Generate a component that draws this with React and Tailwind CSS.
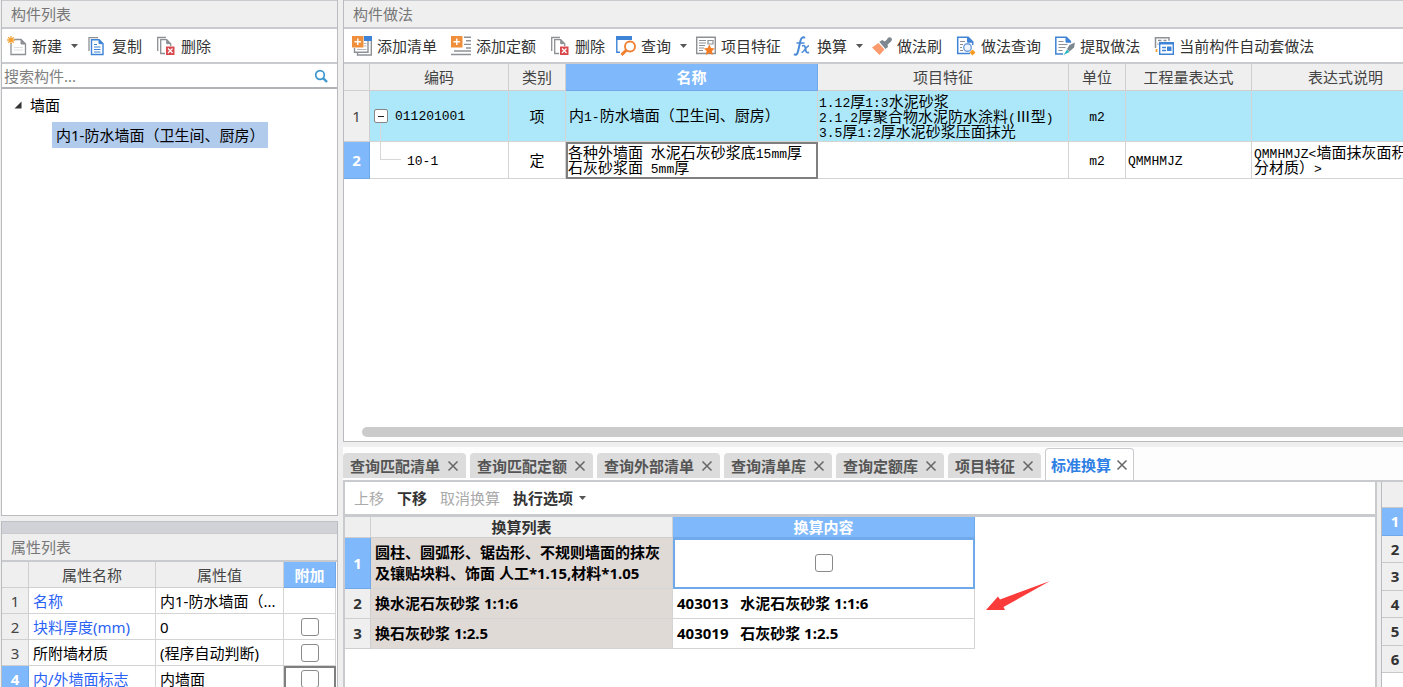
import { useState } from "react";

/* ---------- icons ---------- */
const Svg = ({ children }) => (
  <svg width="20" height="20" viewBox="0 0 20 20" fill="none" className="shrink-0" aria-hidden="true">
    {children}
  </svg>
);

const NewIcon = () => (
  <Svg>
    <path d="M4 3.5h10l4.500 4.500v10.500H4z" fill="#fff" stroke="#8d9196" strokeWidth="1.300" />
    <path d="M14 3.500v4.500h4.500z" fill="#8d9196" stroke="#8d9196" />
    <path d="M7 11.500h9M7 14h9" stroke="#dcdee0" />
    <path d="M1 1h6v6H1z" fill="#fff" />
    <path d="M4 0v8M0 4h8M1.200 1.200l5.600 5.600M6.800 1.200 1.200 6.800" stroke="#f5a43a" strokeWidth="1.300" />
  </Svg>
);

const CopyIcon = () => (
  <Svg>
    <path d="M2 15V1.700h9" stroke="#8d9196" strokeWidth="1.300" />
    <path d="M4.500 3.700h7.500l4 4v10.800H4.500z" fill="#fff" stroke="#3f83d6" strokeWidth="1.400" />
    <path d="M12 3.700v4h4z" fill="#3f83d6" stroke="#3f83d6" />
    <path d="M7 8.500h3M7 11h6.500M7 13.500h6.500M7 16h6.500" stroke="#3f83d6" strokeWidth="1.200" />
  </Svg>
);

const DeleteIcon = () => (
  <Svg>
    <path d="M1.700 15V1.500H10" stroke="#8d9196" strokeWidth="1.300" />
    <path d="M9 17.500H4.700V3.700h6l4 4V10" fill="#fff" stroke="#8d9196" strokeWidth="1.300" />
    <path d="M10.700 3.700v4h4z" fill="#8d9196" stroke="#8d9196" />
    <path d="M10 10.500h8.500V19H10z" fill="#d9484c" />
    <path d="m12 12.500 4.500 4.500m0-4.500L12 17" stroke="#fff" strokeWidth="1.300" />
  </Svg>
);

const AddListIcon = () => (
  <Svg>
    <path d="M12 0h8v5h-8z" fill="#3f83d6" />
    <path d="M19.300 5v14H5.500v-3M16 5v11.300H2.500V12" stroke="#8d9196" strokeWidth="1.400" />
    <path d="M12 7.500h2.500M12 10h2.500M5 13.500h9.500" stroke="#b4b8bc" />
    <path d="M0 0h11.500v11.500H0z" fill="#ef8f3c" />
    <path d="M5.800 2.500v6.500M2.500 5.700H9" stroke="#fff" strokeWidth="1.400" />
  </Svg>
);

const AddQuotaIcon = () => (
  <Svg>
    <path d="M13 1.200h7M15 4.800h5M13 8.400h7M15 12h5M3 15h17M0 18.500h20" stroke="#8d9196" strokeWidth="1.400" />
    <path d="M0 0h11.500v11.500H0z" fill="#ef8f3c" />
    <path d="M5.800 2.500v6.500M2.500 5.700H9" stroke="#fff" strokeWidth="1.400" />
  </Svg>
);

const QueryIcon = () => (
  <Svg>
    <path d="M0 0h16v4H0z" fill="#3f83d6" />
    <path d="M.8 3v13.300H4" stroke="#3f83d6" strokeWidth="1.400" />
    <circle cx="14" cy="10.500" r="5" fill="#fff" stroke="#f08033" strokeWidth="1.900" />
    <path d="m10.500 14-5 4.800" stroke="#f08033" strokeWidth="3" />
  </Svg>
);

const FeatureIcon = () => (
  <Svg>
    <path d="M.7 1.200h18.600v16.300H.7z" fill="#fff" stroke="#8d9196" strokeWidth="1.400" />
    <path d="M3 4.500h7M3 7h7M3 9.500h6M3 12h5M3 14.500h4" stroke="#8d9196" strokeWidth="1.100" />
    <path d="M12 4.500h5v3.500h-5z" stroke="#8d9196" strokeWidth="1.200" />
    <path d="m13.300 8.500 1.700 3.400 3.800.5-2.800 2.700.7 3.900-3.400-1.900-3.400 1.900.7-3.900-2.800-2.700 3.800-.5z" fill="#f57c25" />
  </Svg>
);

const FormulaIcon = () => (
  <Svg>
    <path d="M13 2c-2.200-1.800-4 .2-4.600 3L6 15.500c-.6 2.700-2 4-4 2.700" stroke="#4a8ad8" strokeWidth="2" />
    <path d="M4.500 7h8" stroke="#4a8ad8" strokeWidth="1.500" />
    <path d="M10 10c2.500-1.200 3 0 3.500 3s1.200 4.500 3.500 3.200M17 9.700c-2.500 0-5 6.800-7.500 6.800" stroke="#4a8ad8" strokeWidth="1.600" />
  </Svg>
);

const BrushIcon = () => (
  <Svg>
    <path d="m0 11.500 6.500-4.500 6 6.500L7.500 19z" fill="#fb9a6d" />
    <path d="m7.300 5.800 3-1.800 2.500 1.500L16 2.500l3 3-3.500 3.200.5 2.300-2.500 2z" fill="#7c8790" />
    <circle cx="17.600" cy="3.600" r="2.300" fill="#7c8790" />
  </Svg>
);

const MethodQueryIcon = () => (
  <Svg>
    <path d="M14 17.500H1.700V1.200h10.500l4.500 4.500V9" fill="#fff" stroke="#3f83d6" strokeWidth="1.500" />
    <path d="M11.500 1.200v5h5z" fill="#3f83d6" stroke="#3f83d6" />
    <path d="M4 5.500h5M4 8.500h3M4 11.500h2M4 14.500h3" stroke="#8d9196" strokeWidth="1.200" />
    <circle cx="11.500" cy="11.500" r="3.800" fill="#eef5ff" stroke="#6f9fdd" strokeWidth="1.400" />
    <path d="m16.500 13.500 3 3-3 3-3-3z" fill="#f59a23" />
  </Svg>
);

const ExtractIcon = () => (
  <Svg>
    <path d="M8 18H.8V1.200h10.500l4.500 4.500" fill="#fff" stroke="#3f83d6" strokeWidth="1.500" />
    <path d="M11 1.200v5h5z" fill="#3f83d6" stroke="#3f83d6" />
    <path d="M3.500 5.500h5M3.500 8.500h9M3.500 11.500h7M3.500 14.500h4" stroke="#8d9196" strokeWidth="1.200" />
    <path d="M20 6.500 14.500 9 12 13l2.500 2.500 4.500-4z" fill="#7c8790" />
    <path d="M12 13.500 8.500 19l6-3z" fill="#2db5bf" />
  </Svg>
);

const AutoIcon = () => (
  <Svg>
    <path d="M1.500 12V1.700h13.500v3" stroke="#8d9196" strokeWidth="1.500" />
    <path d="M4 4.500h3.500M9.500 4.500h3M3.500 8h1" stroke="#8d9196" strokeWidth="1.500" />
    <path d="M5.700 6.700h13.600v11.600H5.700z" fill="#fff" stroke="#3f83d6" strokeWidth="1.400" />
    <path d="M5.700 7.500h13.600" stroke="#3f83d6" strokeWidth="2" />
    <path d="M8 11.500h4M8 14.500h4" stroke="#3f83d6" strokeWidth="1.300" />
    <path d="M13 10.500h4.500v4.500H13z" fill="#3f83d6" />
    <path d="M2.500 13v3" stroke="#f59a23" strokeWidth="1.700" />
  </Svg>
);

const Caret = () => (
  <svg width="7" height="4" viewBox="0 0 7 4" className="shrink-0" aria-hidden="true">
    <path d="M0 0h7L3.500 4z" fill="#555" />
  </svg>
);

/* ---------- shared pieces ---------- */
function ToolButton({ icon, label, dropdown }) {
  return (
    <button
      className={`flex h-[26px] shrink-0 items-center gap-[5px] whitespace-nowrap rounded leading-5 text-[#333] hover:bg-[#eef5ff] ${
        dropdown ? "pl-[3px] pr-px" : "px-1.5"
      }`}
    >
      {icon}
      <span>{label}</span>
      {dropdown && (
        <span className="pl-1">
          <Caret />
        </span>
      )}
    </button>
  );
}

function PanelTitle({ children }) {
  return (
    <h2 className="h-[29px] shrink-0 border-b-2 border-t border-[#c8cacd] bg-[#efefef] pl-[9px] leading-[26px] text-[#777]">
      {children}
    </h2>
  );
}

function CheckBox({ label }) {
  return (
    <input
      type="checkbox"
      aria-label={label}
      className="mx-auto block h-[18px] w-[18px] appearance-none rounded-[3px] border border-[#8a8a8a] bg-white checked:bg-[#80b9fb]"
    />
  );
}

// latin runs are set in a narrower monospace face than the chinese ones
function GridText({ children }) {
  return children.split(/([\x21-\x7e]+)/).map((part, i) =>
    i % 2 ? (
      <span key={i} className="font-['Liberation_Mono',monospace] text-[13px]">
        {part}
      </span>
    ) : (
      part
    )
  );
}

/* ---------- data ---------- */
const properties = [
  { name: "名称", value: "内1-防水墙面（...", link: true, check: false },
  { name: "块料厚度(mm)", value: "0", link: true, check: true },
  { name: "所附墙材质", value: "(程序自动判断)", link: false, check: true },
  { name: "内/外墙面标志", value: "内墙面", link: true, check: true },
];

const tabs = ["查询匹配清单", "查询匹配定额", "查询外部清单", "查询清单库", "查询定额库", "项目特征", "标准换算"];

const conversions = [
  { name: "换水泥石灰砂浆 1:1:6", content: "403013   水泥石灰砂浆 1:1:6" },
  { name: "换石灰砂浆 1:2.5", content: "403019   石灰砂浆 1:2.5" },
];

const thBase = "border-b border-r border-[#cfcfcf] bg-[#efefef] p-0";
const th = `${thBase} font-normal text-[#444]`;
const thBold = `${thBase} font-bold text-[#333]`;
const thActive = "border-b border-r border-[#6fa9ea] bg-[#80b9fb] p-0 font-bold text-white";
const td = "border-b border-r border-[#d4d4d4] p-0";

/* ---------- left side ---------- */
function ComponentList() {
  return (
    <section className="flex min-h-0 flex-1 flex-col border-x border-b border-[#b9bbbf] bg-white">
      <PanelTitle>构件列表</PanelTitle>
      <div className="flex h-[35px] shrink-0 items-center gap-0.5 border-b-2 border-[#c8cacd] pl-0.5">
        <ToolButton icon={<NewIcon />} label="新建" dropdown />
        <ToolButton icon={<CopyIcon />} label="复制" />
        <ToolButton icon={<DeleteIcon />} label="删除" />
      </div>
      <div className="flex h-[25px] shrink-0 items-center border-b-2 border-[#b0b2b5] pl-0.5 pr-[9px]">
        <input
          type="text"
          aria-label="搜索构件"
          placeholder="搜索构件..."
          className="min-w-0 flex-1 leading-5 outline-none placeholder:text-[#808080]"
        />
        <svg width="14" height="14" viewBox="0 0 14 14" fill="none" stroke="#3c97cf" aria-hidden="true">
          <circle cx="6" cy="6" r="4.300" strokeWidth="1.700" />
          <path d="m9 9 4 4" strokeWidth="2.400" />
        </svg>
      </div>
      <ul className="pt-[3px] text-black">
        <li>
          <button className="flex h-[26px] items-center gap-2 pl-3">
            <svg width="8" height="8" viewBox="0 0 8 8" aria-hidden="true">
              <path d="M7.500.500v7h-7z" fill="#333" />
            </svg>
            墙面
          </button>
          <ul className="pl-[50px] pt-1">
            <li>
              <button className="h-[26px] whitespace-nowrap bg-[#b1cbed] px-1 leading-[26px]">
                内1-防水墙面（卫生间、厨房）
              </button>
            </li>
          </ul>
        </li>
      </ul>
    </section>
  );
}

function PropertyList() {
  return (
    <section className="h-[166px] shrink-0 overflow-hidden border-x border-[#b9bbbf] bg-white">
      <div className="h-3 border-t border-[#c0c2c8] bg-[#d0d2d8]" />
      <PanelTitle>属性列表</PanelTitle>
      <table className="w-full table-fixed border-separate border-spacing-0 pr-px text-black">
        <colgroup>
          <col className="w-[27px]" />
          <col className="w-[127px]" />
          <col />
          <col className="w-[52px]" />
        </colgroup>
        <thead>
          <tr className="h-[26px]">
            <th className={th}></th>
            <th className={th}>属性名称</th>
            <th className={th}>属性值</th>
            <th className={thActive}>附加</th>
          </tr>
        </thead>
        <tbody>
          {properties.map((row, i) => {
            const active = i === 3;
            return (
              <tr key={row.name} className="h-[26px]">
                <th className={active ? thActive : th}>{i + 1}</th>
                <td className={`${td} pl-1 ${row.link ? "text-[#2a62f5]" : ""}`}>{row.name}</td>
                <td className={`${td} whitespace-nowrap pl-1`}>{row.value}</td>
                <td className={`${td} ${active ? "outline-2 -outline-offset-2 outline-[#7f7f7f]" : ""}`}>
                  {row.check && <CheckBox label={`附加 ${row.name}`} />}
                </td>
              </tr>
            );
          })}
        </tbody>
      </table>
    </section>
  );
}

/* ---------- right side ---------- */
function MethodTable() {
  return (
    <table className="w-[1096px] table-fixed border-separate border-spacing-0 leading-[15px] text-black">
      <colgroup>
        <col className="w-[26px]" />
        <col className="w-[139px]" />
        <col className="w-[57px]" />
        <col className="w-[252px]" />
        <col className="w-[251px]" />
        <col className="w-[57px]" />
        <col className="w-[126px]" />
        <col className="w-[188px]" />
      </colgroup>
      <thead>
        <tr className="h-[27px]">
          <th className={th}></th>
          <th className={th}>编码</th>
          <th className={th}>类别</th>
          <th className={thActive}>名称</th>
          <th className={th}>项目特征</th>
          <th className={th}>单位</th>
          <th className={th}>工程量表达式</th>
          <th className={th}>表达式说明</th>
        </tr>
      </thead>
      <tbody>
        <tr className="h-[51px] bg-[#ade8fa]">
          <th className={th}>1</th>
          <td className={`${td} relative`}>
            <div className="flex items-center gap-[7px] pl-1">
              <button
                aria-label="折叠"
                className="flex h-[14px] w-[14px] items-center justify-center rounded-xs border border-[#888] bg-white"
              >
                <span className="h-px w-1.5 bg-[#222]" />
              </button>
              <GridText>011201001</GridText>
            </div>
            <span className="absolute bottom-0 left-[10px] h-[17px] w-px bg-[#d8d8d8]" />
          </td>
          <td className={`${td} text-center`}>项</td>
          <td className={`${td} pl-[3px]`}>
            <GridText>内1-防水墙面（卫生间、厨房）</GridText>
          </td>
          <td className={`${td} whitespace-nowrap pl-px`}>
            <div className="h-[15px]"><GridText>1.12厚1:3水泥砂浆</GridText></div>
            <div className="h-[15px]"><GridText>2.1.2厚聚合物水泥防水涂料(Ⅲ型)</GridText></div>
            <div className="h-[15px]"><GridText>3.5厚1:2厚水泥砂浆压面抹光</GridText></div>
          </td>
          <td className={`${td} text-center`}>
            <GridText>m2</GridText>
          </td>
          <td className={td}></td>
          <td className={td}></td>
        </tr>
        <tr className="h-[37px]">
          <th className={thActive}>2</th>
          <td className={`${td} relative pl-[37px]`}>
            <span className="absolute left-[10px] top-0 h-[18px] w-[21px] border-b border-l border-[#d8d8d8]" />
            <GridText>10-1</GridText>
          </td>
          <td className={`${td} text-center`}>定</td>
          <td className={`${td} whitespace-pre pl-0.5 outline-2 -outline-offset-2 outline-[#7f7f7f]`}>
            <div className="h-[15px]"><GridText>各种外墙面  水泥石灰砂浆底15mm厚</GridText></div>
            <div className="h-[15px]"><GridText>石灰砂浆面  5mm厚</GridText></div>
          </td>
          <td className={td}></td>
          <td className={`${td} text-center`}>
            <GridText>m2</GridText>
          </td>
          <td className={`${td} pl-0.5`}>
            <GridText>QMMHMJZ</GridText>
          </td>
          <td className={`${td} whitespace-nowrap pl-0.5`}>
            <div className="h-[15px]"><GridText>{"QMMHMJZ<墙面抹灰面积"}</GridText></div>
            <div className="h-[15px]"><GridText>{"分材质）>"}</GridText></div>
          </td>
        </tr>
      </tbody>
    </table>
  );
}

function MethodPanel() {
  return (
    <section className="flex min-h-0 flex-1 flex-col overflow-hidden border-b border-l border-[#b9bbbf] bg-white">
      <PanelTitle>构件做法</PanelTitle>
      <div className="flex h-[35px] shrink-0 items-center gap-0.5 border-b-2 border-[#c8cacd] pl-0.5">
        <ToolButton icon={<AddListIcon />} label="添加清单" />
        <ToolButton icon={<AddQuotaIcon />} label="添加定额" />
        <ToolButton icon={<DeleteIcon />} label="删除" />
        <ToolButton icon={<QueryIcon />} label="查询" dropdown />
        <ToolButton icon={<FeatureIcon />} label="项目特征" />
        <ToolButton icon={<FormulaIcon />} label="换算" dropdown />
        <ToolButton icon={<BrushIcon />} label="做法刷" />
        <ToolButton icon={<MethodQueryIcon />} label="做法查询" />
        <ToolButton icon={<ExtractIcon />} label="提取做法" />
        <ToolButton icon={<AutoIcon />} label="当前构件自动套做法" />
      </div>
      <div className="min-h-0 flex-1 overflow-hidden">
        <MethodTable />
      </div>
      <div className="mb-1 ml-[18px] h-[10px] shrink-0 rounded-l-full bg-[#cbcbcb]" />
    </section>
  );
}

function TabBar({ current, onSelect }) {
  return (
    <div className="flex h-[35px] shrink-0 items-end gap-1 border-b-2 border-[#c8cacd] bg-[#fdfdfd]">
      {tabs.map((tab) => {
        const active = tab === current;
        return (
          <div
            key={tab}
            className={`flex shrink-0 items-center whitespace-nowrap rounded-t font-bold ${
              active
                ? "h-8 gap-[5px] border-x border-t border-[#c8cacd] bg-white px-[5px] text-[#2f80e4]"
                : "mb-0.5 h-[25px] gap-[7px] bg-[#dcdcdc] px-[7px] text-[#555]"
            }`}
          >
            <button className="leading-6" onClick={() => onSelect(tab)}>
              {tab}
            </button>
            <button aria-label={`关闭 ${tab}`}>
              <svg width="12" height="12" viewBox="0 0 12 12" fill="none" stroke="#666" strokeWidth="1.500">
                <path d="m1.500 1.500 9 9m0-9-9 9" />
              </svg>
            </button>
          </div>
        );
      })}
    </div>
  );
}

function ConversionPanel() {
  return (
    <div className="relative min-w-0 flex-1 border-l-2 border-r-2 border-[#c8cacd] bg-white">
      <div className="flex h-[35px] items-center gap-px border-b-[3px] border-[#c8cacd] pl-[3px]">
        <button disabled className="px-1.5 text-[#aaa]">上移</button>
        <button className="px-1.5 font-bold text-[#333]">下移</button>
        <button disabled className="px-1.5 text-[#aaa]">取消换算</button>
        <button className="flex items-center gap-1.5 px-1.5 font-bold text-[#333]">
          执行选项
          <Caret />
        </button>
      </div>
      <table className="w-[630px] table-fixed border-separate border-spacing-0 font-bold leading-[21px] text-black">
        <colgroup>
          <col className="w-[26px]" />
          <col className="w-[302px]" />
          <col className="w-[302px]" />
        </colgroup>
        <thead>
          <tr className="h-[21px] leading-[20px]">
            <th className={thBold}></th>
            <th className={thBold}>换算列表</th>
            <th className={thActive}>换算内容</th>
          </tr>
        </thead>
        <tbody>
          <tr className="h-[51px]">
            <th className={thActive}>1</th>
            <td className={`${td} whitespace-nowrap bg-[#e0dad7] pl-1`}>
              圆柱、圆弧形、锯齿形、不规则墙面的抹灰
              <br />
              及镶贴块料、饰面 人工*1.15,材料*1.05
            </td>
            <td className={`${td} outline-2 -outline-offset-2 outline-[#6fa9ea]`}>
              <CheckBox label="换算内容 1" />
            </td>
          </tr>
          {conversions.map((row, i) => (
            <tr key={row.name} className="h-[30px]">
              <th className={thBold}>{i + 2}</th>
              <td className={`${td} bg-[#e0dad7] pl-1`}>{row.name}</td>
              <td className={`${td} whitespace-pre pl-1`}>{row.content}</td>
            </tr>
          ))}
        </tbody>
      </table>
      {/* red pointer next to the conversion rows */}
      <svg
        width="64"
        height="29"
        viewBox="0 0 64 29"
        className="absolute left-[641px] top-[99px]"
        aria-hidden="true"
      >
        <path d="M0 29 12 15.500 14 18.500 64 0 17.500 26 19 29z" fill="#fb3b3a" />
      </svg>
    </div>
  );
}

function SidePanel() {
  return (
    <div className="w-[22px] shrink-0 overflow-hidden border-l border-[#b9bbbf] bg-white">
      <div className="h-[26px] w-[26px] border-b border-[#c8c8c8] bg-[#efefef]" />
      <ol className="grid h-[165px] w-[26px] grid-rows-6 text-center font-bold text-[#333]">
        {[1, 2, 3, 4, 5, 6].map((n) => (
          <li
            key={n}
            className={`flex items-center justify-center border-b ${
              n === 1 ? "border-[#6fa9ea] bg-[#80b9fb] text-white" : "border-[#c8c8c8] bg-[#efefef]"
            }`}
          >
            {n}
          </li>
        ))}
      </ol>
    </div>
  );
}

export default function App() {
  const [tab, setTab] = useState("标准换算");

  return (
    <div className="flex h-screen gap-[5px] overflow-hidden bg-[#efefef] font-['Noto_Sans','Noto_Sans_CJK_SC',sans-serif] text-[15px] leading-5">
      <aside className="flex w-[338px] shrink-0 flex-col gap-[5px] pl-px">
        <ComponentList />
        <PropertyList />
      </aside>

      <main className="flex min-w-0 flex-1 flex-col gap-[5px]">
        <MethodPanel />
        <section className="flex h-[240px] shrink-0 flex-col">
          <TabBar current={tab} onSelect={setTab} />
          <div className="flex min-h-0 flex-1 gap-1">
            <ConversionPanel />
            <SidePanel />
          </div>
        </section>
      </main>
    </div>
  );
}
